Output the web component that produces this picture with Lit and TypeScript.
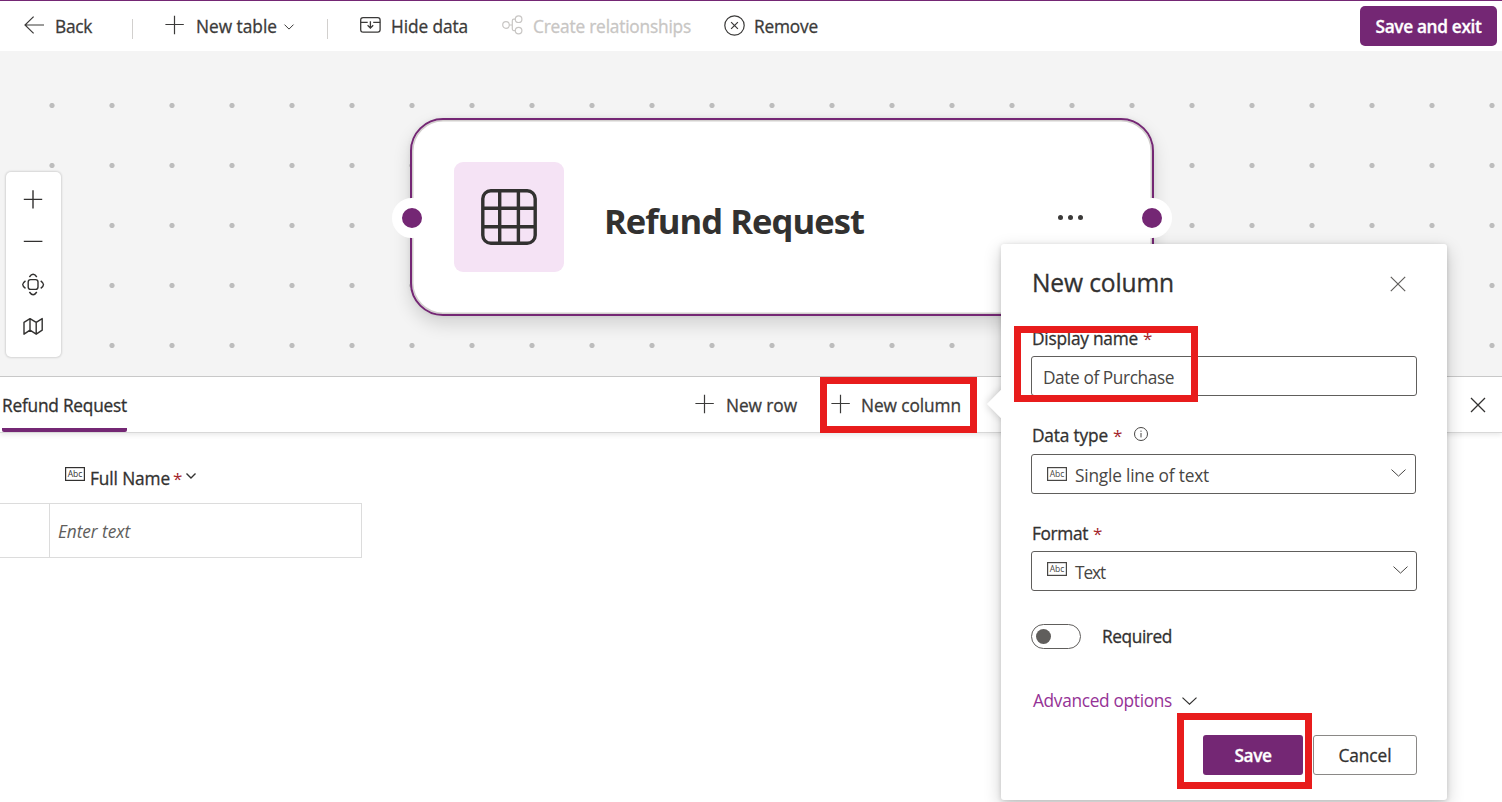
import { LitElement, html, css, svg } from "lit";
import { customElement, property } from "lit/decorators.js";

/** A single-line label whose tracking is tightened or widened to fill a set width. */
@customElement("fit-label")
class FitLabel extends LitElement {
  @property({ type: Number }) width = 0;
  @property() text = "";

  static styles = css`
    :host { display: block; box-sizing: border-box; flex: none; padding-left: 1px; white-space: nowrap; }
    .run { display: inline-block; white-space: pre; }
  `;

  render() {
    return html`<span class="run">${this.text}</span>`;
  }

  updated() {
    const run = this.renderRoot.querySelector(".run") as HTMLElement;
    run.style.letterSpacing = "0px";
    const natural = run.getBoundingClientRect().width;
    if (this.width > 0) {
      run.style.letterSpacing = `${(this.width - 2 - natural) / this.text.length}px`;
      this.style.width = `${this.width}px`;
    }
  }
}

const label = (text: string, width: number) => html`<fit-label .text=${text} .width=${width}></fit-label>`;

const icon = (w: number, h: number, body: unknown, stroke = 1.2) => html`
  <svg class="icon" width=${w} height=${h} viewBox="0 0 ${w} ${h}" fill="none" stroke="currentColor" stroke-width=${stroke}>${body}</svg>`;

const plus = () => icon(20, 20, svg`<path d="M9.5 .8v18.4M.4 9.5h18.4"/>`, 1.2);
const chevron = (w: number, h: number, stroke = 1.1) =>
  icon(w, h, svg`<path d="M.5 .6L${w / 2} ${h - 0.9}L${w - 0.5} .6"/>`, stroke);
const abc = () => icon(20, 14, svg`
  <rect x=".6" y=".6" width="18.8" height="12.8"/>
  <text class="abc" x="10" y="10" text-anchor="middle" textLength="14.6" lengthAdjust="spacingAndGlyphs">Abc</text>`, 1.2);

@customElement("app-root")
class AppRoot extends LitElement {
  static styles = css`
    :host {
      display: flex; flex-direction: column; position: relative;
      width: 1502px; height: 802px; overflow: hidden; background: #fff;
      font: 500 17.3px/24px "Open Sans", "Noto Sans", sans-serif; color: #323130;
      -webkit-text-stroke: .3px currentColor;
    }
    * { box-sizing: border-box; }
    .icon { display: block; flex: none; overflow: visible; }
    .abc { font: 400 9px "Open Sans", sans-serif; fill: currentColor; stroke: none; -webkit-text-stroke: 0; }
    .star { color: #a4262c; font-weight: 400; font-size: 17px; -webkit-text-stroke: 0; }

    .toolbar {
      display: flex; align-items: center; flex: none; height: 51px; padding: 0 5px 0 24px;
      border-top: 1px solid #742774; background: #fff; color: #3b3a39;
    }
    .cmd { display: flex; align-items: center; height: 49px; }
    .cmd .icon { margin-top: -2px; }
    .cmd fit-label, .primary fit-label, .cancel fit-label, .required fit-label { margin-top: 2px; }
    .cmd.back { gap: 10px; width: 108px; }
    .cmd.add { gap: 10px; margin-left: 32px; width: 162px; }
    .cmd.add .chev { margin: 3px 0 0 -4px; }
    .cmd.hide { gap: 9px; margin-left: 32px; width: 142px; }
    .cmd.rel { gap: 9px; width: 222px; color: #c8c6c4; }
    .cmd.remove { gap: 8px; }
    .sep { width: 1px; height: 20px; margin-top: 6px; background: #d2d0ce; }
    .primary { display: flex; align-items: center; justify-content: center; background: #742774; color: #fff; font-weight: 600; }
    .exit { width: 137px; height: 40px; margin-left: auto; border-radius: 5px; }

    .canvas {
      position: relative; flex: none; height: 325px; overflow: hidden; background-color: #f4f4f4;
      background-image: radial-gradient(circle at 30px 30.5px, #bdbdbd 2.2px, rgba(189, 189, 189, 0) 3px);
      background-size: 60px 60px; background-position: 22px 24px;
    }
    .zoom {
      position: absolute; left: 6px; top: 121px; width: 55px; height: 185px;
      display: flex; flex-direction: column; align-items: center; padding: 17px 1px 0 0;
      background: #fff; border-radius: 5px; box-shadow: 0 0 2px 1px rgba(0, 0, 0, .13);
    }
    .node {
      position: absolute; left: 410px; top: 67px; width: 744px; height: 198px;
      display: flex; align-items: center; padding: 0 69px 0 42px;
      border: 2px solid #742774; border-radius: 33px; background: #fff;
      box-shadow: inset 0 0 0 1.5px #d2cfcd, 0 8px 18px rgba(0, 0, 0, .14), 0 0 5px rgba(0, 0, 0, .07);
    }
    .tile { display: flex; align-items: center; justify-content: center; width: 110px; height: 110px; border-radius: 9px; background: #f5e3f5; }
    .node-title { margin: 7px 0 0 39px; font-size: 34.6px; line-height: 48px; font-weight: 700; -webkit-text-stroke: 0; }
    .dots { display: flex; gap: 4.8px; margin: 1px 0 0 auto; }
    .dots i { width: 5.2px; height: 5.2px; border-radius: 50%; background: #3b3a39; }
    .handle { position: absolute; top: 78px; width: 40px; height: 40px; border: 10px solid #fff; border-radius: 50%; background: #742774; }
    .handle.left { left: -20px; }
    .handle.right { right: -20px; }

    .tabs {
      display: flex; align-items: center; flex: none; height: 57px; padding: 0 16px 0 2px;
      border-top: 1px solid #c8c8c8; border-bottom: 1px solid #d8d8d8; background: #fff;
      box-shadow: 0 2px 5px rgba(0, 0, 0, .09);
    }
    .tab { height: 55px; width: 125px; padding-top: 17px; border-bottom: 4px solid #742774; border-radius: 2px; }
    .tab fit-label { margin-left: -1px; }
    .cmd.row { gap: 10px; margin-left: 568px; width: 136px; color: #3b3a39; }
    .cmd.col { gap: 9px; color: #3b3a39; }
    .close { margin-left: auto; }

    .grid { width: 362px; }
    .head { display: flex; height: 70px; padding: 34px 0 0 65px; }
    .head .icon { margin-top: 0; }
    .head fit-label { margin: 0 2px 0 4px; }
    .head .caret { margin: 6px 0 0 4px; }
    .entry { display: flex; height: 55px; border: 1px solid #dcdcdc; border-left: 0; }
    .gutter { width: 50px; border-right: 1px solid #dcdcdc; }
    .cell { padding: 16px 0 0 7px; font-style: italic; font-weight: 400; color: #605e5c; -webkit-text-stroke: 0; }

    .callout {
      position: absolute; left: 1001px; top: 244px; width: 446px; height: 556px; padding: 27px 30px 0;
      background: #fff; border-radius: 3px; box-shadow: 0 6px 18px rgba(0, 0, 0, .2), 0 1px 5px rgba(0, 0, 0, .14);
    }
    .beak-clip { position: absolute; left: 961px; top: 374px; width: 40px; height: 60px; overflow: hidden; }
    .beak { width: 20px; height: 20px; margin: 20px 0 0 30px; transform: rotate(45deg); background: #fff; box-shadow: 0 0 8px rgba(0, 0, 0, .2); }
    .title { display: flex; align-items: center; justify-content: space-between; height: 26px; padding-right: 11px; font-size: 24.6px; color: #323130; }
    .title fit-label { margin-top: -2px; }
    .title .icon { color: #605e5c; }
    .field-label { display: flex; height: 24px; margin-top: 28px; }
    .field-label.first { margin-top: 30px; }
    .field-label .star { margin-left: 4px; }
    .field-label .info { margin: 3px 0 0 12px; color: #484644; }
    .box { display: flex; align-items: center; height: 40px; border: 1px solid #605e5c; border-radius: 3px; font-weight: 400; color: #484644; -webkit-text-stroke: 0; }
    .input { margin-top: 5px; padding: 3px 0 0 10px; }
    .select { padding: 0 8px 0 15px; }
    .select.kind { width: 385px; margin-top: 6px; padding-right: 9px; }
    .select.format { margin-top: 5px; }
    .select.format > .icon { margin-top: -5px; }
    .select.kind > .icon { margin-top: -1px; }
    .select fit-label { margin: 3px 0 0 7px; }
    .select .chev { margin: -2px 0 0 auto; }
    .required { display: flex; align-items: center; gap: 20px; height: 26px; margin-top: 32px; }
    .switch { display: flex; align-items: center; width: 50px; height: 25px; padding-left: 4px; border: 1px solid #605e5c; border-radius: 13px; }
    .knob { width: 15px; height: 15px; border-radius: 50%; background: #605e5c; }
    .advanced { display: flex; align-items: center; gap: 9px; height: 24px; margin: 40px 0 0 1px; color: #953296; font-weight: 400; -webkit-text-stroke: 0; }
    .advanced .icon { color: #323130; margin-top: -1px; }
    .actions { display: flex; justify-content: flex-end; gap: 10px; margin-top: 22px; }
    .actions .primary { width: 100px; height: 40px; border-radius: 3px; }
    .actions .cancel { display: flex; align-items: center; justify-content: center; width: 104px; height: 40px; border: 1px solid #8a8886; border-radius: 3px; }

    .mark { position: absolute; border: 7.5px solid #e81c1c; }
    .mark.column { left: 820px; top: 377px; width: 157px; height: 56px; }
    .mark.name { left: 1014px; top: 326px; width: 184px; height: 76px; }
    .mark.save { left: 1177px; top: 713px; width: 135px; height: 76px; }
  `;

  render() {
    return html`
      <header class="toolbar">
        <div class="cmd back">
          ${icon(20, 18, svg`<path d="M20 9H1M9.6.6L1 9l8.6 8.4"/>`)}
          ${label("Back", 39)}
        </div>
        <div class="sep"></div>
        <div class="cmd add">
          ${plus()} ${label("New table", 83)}
          <span class="chev">${chevron(10, 6, 1)}</span>
        </div>
        <div class="sep"></div>
        <div class="cmd hide">
          ${icon(21, 16, svg`<rect x=".7" y=".7" width="19.4" height="14.4" rx="2.4"/><path d="M.7 5.3h7M13.2 5.3h7M10.4 4.2v6.6M7.6 8.2l2.8 2.9 2.8-2.9"/>`, 1.3)}
          ${label("Hide data", 79)}
        </div>
        <div class="cmd rel">
          ${icon(21, 20, svg`<circle cx="4" cy="10" r="3.3"/><circle cx="16.6" cy="4.2" r="3.3"/><circle cx="16.6" cy="15.6" r="3.3"/><path d="M7.3 10h3M13.3 4.2h-1.5q-1.5 0-1.5 1.5v8.4q0 1.5 1.5 1.5h1.5"/>`, 1.2)}
          ${label("Create relationships", 160)}
        </div>
        <div class="cmd remove">
          ${icon(21, 21, svg`<circle cx="10.5" cy="10.5" r="9.7"/><path d="M7.1 7.1l6.8 6.8M13.9 7.1l-6.8 6.8"/>`, 1.2)}
          ${label("Remove", 66)}
        </div>
        <div class="primary exit">${label("Save and exit", 108)}</div>
      </header>

      <section class="canvas">
        <div class="node">
          <div class="tile">
            ${icon(56, 56, svg`<rect x="1.8" y="1.8" width="52.4" height="52.4" rx="8"/><path d="M18.7 2v52M37.4 2v52M2 19.2h52M2 37.8h52"/>`, 3.4)}
          </div>
          <div class="node-title">${label("Refund Request", 262)}</div>
          <div class="dots"><i></i><i></i><i></i></div>
          <div class="handle left"></div>
          <div class="handle right"></div>
        </div>
        <div class="zoom">
          ${icon(24, 155, svg`
            <path d="M12 1.2v18.4M2.8 10.4h18.4M2.8 52.4h18.6"/>
            <rect x="7.2" y="90.6" width="9.8" height="9.8" rx="2.4"/>
            <path d="M8.4 88q3.7-5.6 7.4 0M8.4 103q3.7 5.6 7.4 0M4.5 91.8q-5.6 3.8 0 7.6M19.7 91.8q5.6 3.8 0 7.6"/>
            <path d="M3 133.4l6-3.8 6.2 3.8 6-3.8v11.6l-6 4-6.2-4-6 4zM9 129.6v11.6M15.2 133.4v11.8" stroke-linejoin="round"/>`, 1.4)}
        </div>
      </section>

      <nav class="tabs">
        <div class="tab">${label("Refund Request", 127)}</div>
        <div class="cmd row">${plus()} ${label("New row", 73)}</div>
        <div class="cmd col">${plus()} ${label("New column", 102)}</div>
        <span class="close">${icon(16, 16, svg`<path d="M1 1l14 14M15 1L1 15"/>`, 1.3)}</span>
      </nav>

      <section class="grid">
        <div class="head">
          ${abc()} ${label("Full Name", 82)}
          <span class="star">*</span>
          <span class="caret">${chevron(10, 6, 1.4)}</span>
        </div>
        <div class="entry">
          <div class="gutter"></div>
          <div class="cell">${label("Enter text", 74)}</div>
        </div>
      </section>

      <aside class="callout">
        <div class="title">
          ${label("New column", 144)}
          ${icon(16, 16, svg`<path d="M.8.8l14.4 14.4M15.2.8L.8 15.2"/>`, 1.2)}
        </div>
        <div class="field-label first">${label("Display name", 108)}<span class="star">*</span></div>
        <div class="box input">${label("Date of Purchase", 133)}</div>
        <div class="field-label">
          ${label("Data type", 78)}<span class="star">*</span>
          <span class="info">${icon(14, 14, svg`<circle cx="7" cy="7" r="6.5"/><path d="M7 6v4.4M7 3.6v1.2"/>`, 1)}</span>
        </div>
        <div class="box select kind">${abc()} ${label("Single line of text", 136)}<span class="chev">${chevron(15, 8, 1)}</span></div>
        <div class="field-label">${label("Format", 58)}<span class="star">*</span></div>
        <div class="box select format">${abc()} ${label("Text", 32)}<span class="chev">${chevron(15, 8, 1)}</span></div>
        <div class="required">
          <div class="switch"><div class="knob"></div></div>
          ${label("Required", 72)}
        </div>
        <div class="advanced">${label("Advanced options", 141)} ${chevron(15, 8, 1.2)}</div>
        <div class="actions">
          <div class="primary">${label("Save", 39)}</div>
          <div class="cancel">${label("Cancel", 55)}</div>
        </div>
      </aside>
      <div class="beak-clip"><div class="beak"></div></div>

      <div class="mark column"></div>
      <div class="mark name"></div>
      <div class="mark save"></div>
    `;
  }
}
